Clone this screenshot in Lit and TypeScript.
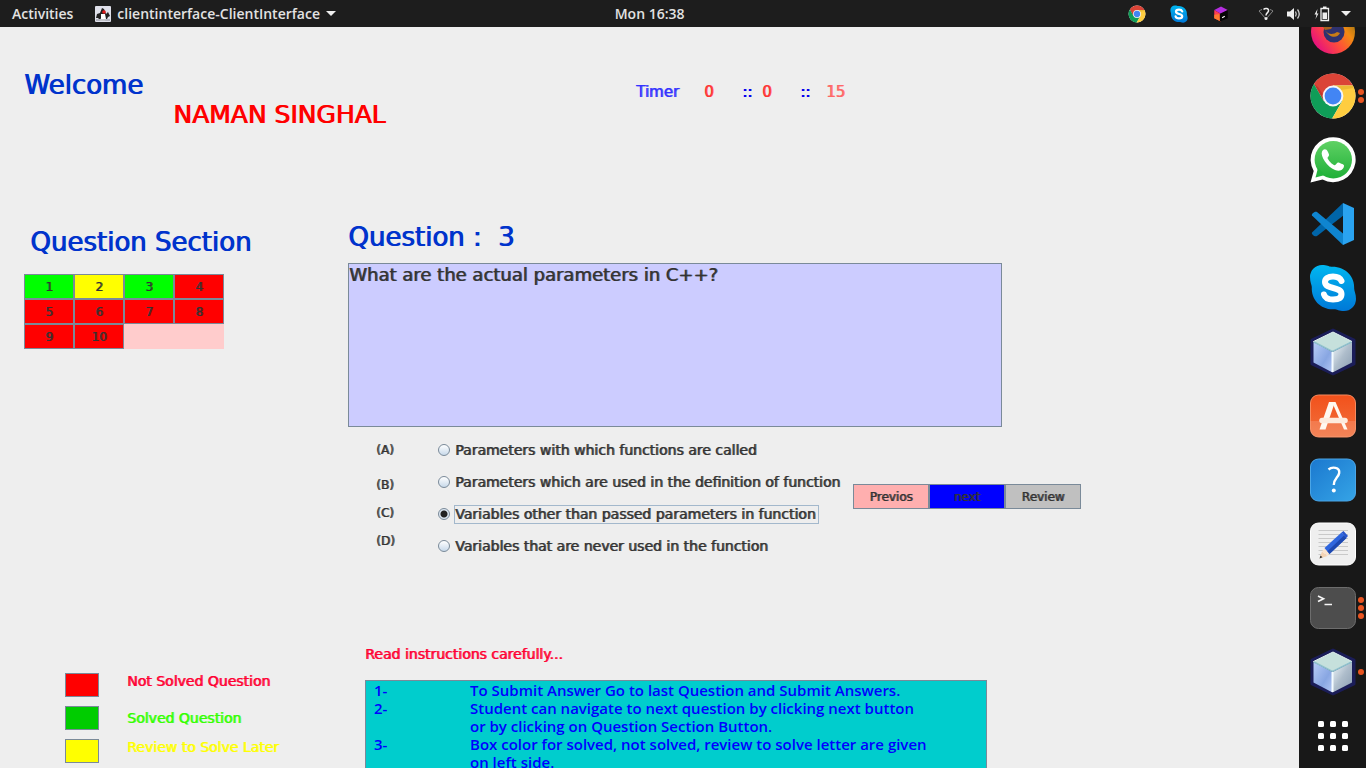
import { LitElement, html, css, svg } from "lit";
import { customElement, property, state } from "lit/decorators.js";
import { classMap } from "lit/directives/class-map.js";

const chrome = svg`
  <circle r="22.5" fill="#fff"/>
  <path d="M19.9-10.5A22.5 22.5 0 0 0-19.04-11.99L-9.09 5.25 0 0V-10.5Z" fill="#db4437"/>
  <path d="M-19.04-11.99A22.5 22.5 0 0 0-.86 22.48L9.09 5.25 0 0-9.09 5.25Z" fill="#0f9d58"/>
  <path d="M-.86 22.48A22.5 22.5 0 0 0 19.9-10.5H0V0L9.09 5.25Z" fill="#ffcd40"/>
  <path d="M0-10.5H19.9L20.8-8 8-6Z" fill="#c99a1c" opacity=".35"/>
  <path d="M-19.04-11.99-9.09 5.25-10.4-2-15-9Z" fill="#8f2318" opacity=".35"/>
  <circle r="10.4" fill="#f4f6fa"/>
  <circle r="8.4" fill="#4285f4"/>`;

const skype = svg`
  <defs><linearGradient id="sk" x1="0" y1="0" x2="0" y2="1"><stop offset="0" stop-color="#00b7f0"/><stop offset="1" stop-color="#0078d7"/></linearGradient></defs>
  <path d="M-11-23C-6-23-4-21.4-2-21.3 12-22 22-12 21.2 1 21.3 3 23 6 23 11A12 12 0 0 1 11 23C6 23 4 21.4 1 21.3-12 22-22 12-21.2-1-21.3-3-23-6-23-11A12 12 0 0 1-11-23Z" fill="url(#sk)"/>
  <path d="M8.500-7C7-10.500 4-11.500 0-11.500-5-11.500-8-9.500-8-6-8 1.800 8.500-1.800 8.500 6 8.500 10 5 11.500 0 11.500-5 11.500-8 10-9 6.500" fill="none" stroke="#fff" stroke-width="6" stroke-linecap="round"/>`;

const cube = svg`
  <defs>
    <linearGradient id="cl" x1="0" y1="0" x2="1" y2="1"><stop offset="0" stop-color="#b9cdf7"/><stop offset=".6" stop-color="#88a6e2"/><stop offset="1" stop-color="#b4c8f4"/></linearGradient>
    <linearGradient id="cr" x1="0" y1="0" x2="1" y2="1"><stop offset="0" stop-color="#f2f9fc"/><stop offset=".5" stop-color="#aebdcb"/><stop offset="1" stop-color="#8a9db1"/></linearGradient>
  </defs>
  <path d="M0-22 21-12V12L0 22-21 12V-12Z" fill="#1b1d58" stroke="#1b1d58" stroke-width="3" stroke-linejoin="round"/>
  <path d="M0-20 19-10.500-.5-1-19.500-10.5Z" fill="#c6e0dc" stroke="#e2f0ef" stroke-width="1"/>
  <path d="M-19.500-10-.5 0V20.500L-19.500 10.500Z" fill="url(#cl)"/>
  <path d="M19-10-.5 0V20.500L19 10.500Z" fill="url(#cr)"/>
  <path d="M-19-10-.5-.5 18.500-10" fill="none" stroke="#8fc0cc" stroke-width="1.500"/>
  <path d="M-.5 0V20" stroke="#f3fbff" stroke-width="2"/>`;

const pictures: Record<string, unknown> = {
  chrome, skype, cube,
  firefox: svg`
    <defs><linearGradient id="ff" x1=".1" y1=".8" x2=".9" y2=".2"><stop offset="0" stop-color="#e6127e"/><stop offset=".4" stop-color="#ff4a3d"/><stop offset=".75" stop-color="#f28a12"/><stop offset="1" stop-color="#a87712"/></linearGradient></defs>
    <circle r="22" fill="url(#ff)"/>
    <circle cx="1" r="10.500" fill="#2f326e"/>
    <path d="M-8-2C-4 4 1 2 4 0L7 1C5 6-3 7-8-2Z" fill="#c87c17"/>
    <path d="M-12-8-8-2-2-3 1-8Z" fill="#a7621f"/>`,
  whatsapp: svg`
    <defs><linearGradient id="wa" x1="0" y1="0" x2="0" y2="1"><stop offset="0" stop-color="#5fd164"/><stop offset="1" stop-color="#20b038"/></linearGradient></defs>
    <path d="M-22.500 22.500-19.300 11A22.500 22.500 0 1 1-10.500 19.500Z" fill="#fff"/>
    <circle cx=".3" cy="-.3" r="18.700" fill="url(#wa)"/>
    <path d="M-17.500 17.500-15 8-8 15Z" fill="#25b33d"/>
    <path d="M-7.500-10.500C-8.500-11-10-10.500-11-8.500-13-4-6 7 2 10 8 12 11 9 11 5.500 11 4.500 6 2.500 5 2.500 3.500 2.500 3 5.500 1.500 5.300-1 4.500-5 0-5.500-2-5.500-3-3.500-4-4-5.500-5-8.500-6-10.500-7.500-10.500Z" fill="#fff"/>`,
  vscode: svg`
    <path d="M10-21-21 8.500C-22 10-18 13.500-16 12L11-9Z" fill="#0065a9"/>
    <path d="M-21-8.500C-22-10-18-13.500-16-12L13 12 10 21Z" fill="#0f85d0"/>
    <path d="M10-21 21-16V16L10 21Z" fill="#2aa3f0"/>`,
  software: svg`
    <defs><linearGradient id="so" x1="0" y1="0" x2="0" y2="1"><stop offset="0" stop-color="#f2511b"/><stop offset="1" stop-color="#f1703d"/></linearGradient></defs>
    <rect x="-22.500" y="-21" width="45" height="42" rx="8" fill="url(#so)" stroke="#f58a5f"/>
    <path d="M-22.500 5H22.500V13Q22.500 21 14.500 21H-14.500Q-22.500 21-22.500 13Z" fill="#fff" opacity=".14"/>
    <path d="M-4-14H2L-7.500 13.500H-13.500Z" fill="#fff8f0"/>
    <path d="M-1-14H2.500L14.500 13.500H11Z" fill="#fff8f0"/>
    <path d="M-11 4.500H12" stroke="#fdebdd" stroke-width="5.500" stroke-linecap="round"/>`,
  help: svg`
    <defs><linearGradient id="he" x1="0" y1="0" x2="1" y2="1"><stop offset="0" stop-color="#1b78cf"/><stop offset="1" stop-color="#35a4e6"/></linearGradient></defs>
    <rect x="-22.500" y="-21" width="45" height="42" rx="8" fill="url(#he)" stroke="#4aa5e6"/>
    <path d="M-4.500-10.500C-1-13.500 7-13 6.200-7 5.500-2.500 .8-1.500 .8 5" fill="none" stroke="#fff" stroke-width="2.400"/>
    <circle cx=".8" cy="10.500" r="2" fill="#fff"/>`,
  editor: svg`
    <rect x="-22.500" y="-21" width="45" height="42" rx="8" fill="#efefef" stroke="#fff"/>
    <path d="M-14.500-13.500H15M-14.500-9.500H15M-14.500-5.500H15M-14.500-1.500H15M-14.500 2.500H15M-14.500 6.500H15M-14.500 10.500H15" stroke="#c9c9c9"/>
    <path d="M-13.500 14.500-11 7.500-5.500 12Z" fill="#f3d3b4"/>
    <path d="M-13.500 14.500-12.500 11.500-10.500 13.200Z" fill="#333"/>
    <path d="M-11 7-7.500 4.500-3.500 9-5.500 12Z" fill="#fae3cd"/>
    <path d="M-8.500 4 8.500-11.500 13.500-6-3.500 10Z" fill="#2f66de"/>
    <path d="M-5.500 7.200 11-8.500 13.500-6-3.500 10Z" fill="#1d48b0"/>
    <path d="M8.500-11.500 10.500-13 15-8 13-6Z" fill="#2755cc"/>`,
  terminal: svg`
    <rect x="-22.500" y="-20.500" width="45" height="41" rx="8" fill="#4d4d4d" stroke="#6d6d6d"/>
    <path d="M-15-12-9.500-9.200-15-6.500M-8.500-3.500H-1" fill="none" stroke="#f5f5f5" stroke-width="1.700"/>`,
  grid: svg`${[-12, 0, 12].map((y) => [-12, 0, 12].map((x) => svg`<rect x=${x - 3} y=${y - 3} width="6" height="6" rx="1.500" fill="#fff"/>`))}`,
  toolbox: svg`
    <path d="M0-20 18-11 0 0-18-11Z" fill="#b52ee0"/>
    <path d="M-18-11 0 0V20L-18 11Z" fill="#ff3d54"/>
    <path d="M-18 2-4 0-2 19-18 11Z" fill="#ff7a2e"/>
    <path d="M18-11-3-1V20L18 11Z" fill="#050505"/>
    <path d="M3 10 10 6" stroke="#fff" stroke-width="3"/>`,
};

@customElement("app-picture")
export class AppPicture extends LitElement {
  @property() name = "";

  static styles = css`
    :host { display: block; }
    .art { display: block; width: 100%; height: 100%; }
  `;

  render() {
    return html`<svg class="art" viewBox="-24 -24 48 48" aria-hidden="true">${pictures[this.name]}</svg>`;
  }
}

@customElement("top-bar")
export class TopBar extends LitElement {
  static styles = css`
    :host {
      display: grid;
      grid-template-columns: 45% 1fr auto;
      align-items: center;
      height: 27px;
      background: #1d1d1d;
      color: #e2e2e2;
      font: 600 14px/20px "Open Sans", "Noto Sans", sans-serif;
    }
    button { border: 0; padding: 0; background: none; color: inherit; font: inherit; }
    .left { display: flex; align-items: center; gap: 22px; padding-left: 12px; }
    .app { display: flex; align-items: center; gap: 6px; }
    .duke { width: 16px; height: 16px; }
    .caret { width: 10px; height: 6px; }
    .clock { justify-self: start; }
    .tray { display: flex; align-items: center; padding-right: 15px; gap: 10px; }
    .mini { width: 18px; height: 18px; }
    .apps { display: flex; gap: 24px; padding-right: 17px; }
    .status { width: 18px; height: 18px; }
  `;

  render() {
    return html`
      <div class="left">
        <button>Activities</button>
        <button class="app">
          <svg class="duke" viewBox="0 0 16 16" aria-hidden="true">
            <rect width="16" height="16" rx="1" fill="#dfe0ea"/>
            <path d="M7 2 9 3 11 8 13 6 15 10 13 11 12 13H4L3 12 1 12 2 8 5 7Z" fill="#222"/>
            <path d="M6 8 10 8 11 13 10 15H5L6 12Z" fill="#fff"/>
            <path d="M1 14H15" stroke="#8b8b96"/>
            <circle cx="9" cy="6" r="1.800" fill="#e01818"/>
          </svg>
          <span>clientinterface-ClientInterface</span>
          <svg class="caret" viewBox="0 0 10 6" aria-hidden="true"><path d="M0 0H10L5 5Z" fill="#eee"/></svg>
        </button>
      </div>
      <button class="clock">Mon 16:38</button>
      <div class="tray">
        <div class="apps">
          <app-picture class="mini" name="chrome"></app-picture>
          <app-picture class="mini" name="skype"></app-picture>
          <app-picture class="mini" name="toolbox"></app-picture>
        </div>
        <svg class="status" viewBox="0 0 16 18" aria-hidden="true">
          <path d="M4 4.500Q2.500 5 1 6L8 14 15 6Q13.500 5 12 4.500" fill="none" stroke="#888"/>
          <path d="M5.500 4.500C7 3 11 3 10.500 6 10 8 8 8 8 10.500" fill="none" stroke="#eee" stroke-width="1.500"/>
          <circle cx="8" cy="13.500" r="1.500" fill="#eee"/>
        </svg>
        <svg class="status" viewBox="0 0 16 18" aria-hidden="true">
          <path d="M1 6.500H4L8 3V15L4 11.500H1Z" fill="#eee"/>
          <path d="M9.500 6.500Q11 9 9.500 11.500M11.500 4.500Q15 9 11.500 13.500" fill="none" stroke="#ccc" stroke-width="1.300"/>
        </svg>
        <svg class="status" viewBox="0 0 16 18" aria-hidden="true">
          <path d="M3.500 4 .5 9.500H2.500L1.500 14 4.500 8.500H2.800Z" fill="#eee"/>
          <path d="M7 3.500H14.500V15.500H7Z" fill="none" stroke="#eee" stroke-width="1.300"/>
          <path d="M9 1.500H12.500V3H9ZM8.500 7.500H13V14H8.500Z" fill="#eee"/>
        </svg>
        <svg class="caret" viewBox="0 0 10 6" aria-hidden="true"><path d="M0 0H10L5 5Z" fill="#eee"/></svg>
      </div>
    `;
  }
}

@customElement("app-dock")
export class AppDock extends LitElement {
  static styles = css`
    :host {
      display: flex;
      flex-direction: column;
      justify-content: flex-end;
      width: 67px;
      overflow: hidden;
      background: #181818;
    }
    .item {
      position: relative;
      flex: none;
      height: 64px;
      border: 0;
      padding: 8px 9px 8px 10px;
      background: none;
    }
    .picture { width: 48px; height: 48px; }
    .dots {
      position: absolute;
      right: 2px;
      top: 0;
      bottom: 0;
      display: flex;
      flex-direction: column;
      justify-content: center;
      gap: 2px;
    }
    .dot { width: 6px; height: 6px; border-radius: 3px; background: #e95420; }
  `;

  private items: [string, string, number][] = [
    ["firefox", "Firefox", 0], ["chrome", "Chrome", 2], ["whatsapp", "WhatsApp", 0],
    ["vscode", "Visual Studio Code", 0], ["skype", "Skype", 0], ["cube", "NetBeans", 0],
    ["software", "Software", 0], ["help", "Help", 0], ["editor", "Text Editor", 0],
    ["terminal", "Terminal", 3], ["cube", "Client Interface", 1], ["grid", "Show Applications", 0],
  ];

  render() {
    return this.items.map(([name, label, dots]) => html`
      <button class="item" aria-label=${label}>
        <app-picture class="picture" name=${name}></app-picture>
        <span class="dots">${Array.from({ length: dots }, () => html`<span class="dot"></span>`)}</span>
      </button>`);
  }
}

@customElement("app-root")
export class AppRoot extends LitElement {
  @state() private chosen = 2;

  private states = ["solved", "review", "solved", "", "", "", "", "", "", ""];

  private answers = [
    "Parameters with which functions are called",
    "Parameters which are used in the definition of function",
    "Variables other than passed parameters in function",
    "Variables that are never used in the function",
  ];

  private rules = [
    "To Submit Answer Go to last Question and Submit Answers.",
    "Student can navigate to next question by clicking next button\nor by clicking on Question Section Button.",
    "Box color for solved, not solved, review to solve letter are given\non left side.",
  ];

  static styles = css`
    :host {
      display: flex;
      flex-direction: column;
      height: 100vh;
      overflow: hidden;
      background: #eee;
      color: #333;
      font: 14px/18px "DejaVu Sans", sans-serif;
      --heavy: 1px 0 color-mix(in srgb, currentColor 80%, transparent);
    }
    .body { flex: 1; min-height: 0; display: flex; }
    .page { flex: 1; min-width: 0; overflow: hidden; padding: 43px 24px 0; text-shadow: var(--heavy); }
    .intro { display: grid; grid-template-columns: 612px 1fr; margin-bottom: 92px; }
    h1, h2, p, ol, fieldset { margin: 0; padding: 0; border: 0; font-weight: 400; }
    .welcome, .title { font-size: 26px; line-height: 30px; color: #03c; text-shadow: 1px 0 currentColor; }
    .name { display: block; padding-left: 149px; color: #f00; font-size: 25px; text-shadow: 1px 0 currentColor; }
    .timer {
      display: grid;
      grid-template-columns: 68px 38px 20px 38px 26px auto;
      justify-content: start;
      padding-top: 13px;
      font-size: 15px;
      color: #33f;
    }
    .unit { color: #f33; }
    .seconds { color: #f66; }
    .colon { color: #00e; text-shadow: 1px 0 currentColor; }
    .exam { display: grid; grid-template-columns: 324px minmax(0, 1fr); row-gap: 83px; }
    .section { padding-top: 5px; }
    .section .title { padding-left: 6px; margin-bottom: 17px; }
    .numbers { display: grid; grid-template-columns: repeat(4, 50px); width: 200px; background: #fcc; }
    .key {
      height: 25px;
      padding: 0;
      border: 1px solid #7a8a99;
      border-radius: 0;
      background: #f00;
      color: #333;
      font: 12px/16px "DejaVu Sans", sans-serif;
      text-shadow: var(--heavy);
    }
    .solved { background: #0f0; }
    .review { background: #ff0; }
    .question .title { margin-bottom: 11px; white-space: pre; }
    .prompt {
      max-width: 654px;
      min-height: 164px;
      box-sizing: border-box;
      border: 1px solid #7a8a99;
      background: #ccf;
      font-size: 18px;
      line-height: 21px;
    }
    .reply { display: flex; padding: 7px 0 0 28px; }
    .letters { display: flex; flex-direction: column; width: 62px; font-size: 12px; line-height: 28px; padding-top: 2px; }
    .letter:first-child { margin-bottom: 7px; }
    .answers { width: 415px; min-width: 0; }
    .answer { display: flex; align-items: center; height: 32px; gap: 4px; }
    .radio {
      appearance: none;
      flex: none;
      width: 12px;
      height: 12px;
      margin: 0;
      border: 1px solid #7a8a99;
      border-radius: 50%;
      background: linear-gradient(#fff, #c8d9ea);
    }
    .radio:checked { background: radial-gradient(circle, #222 0 3px, #dbe6f1 4px); }
    .choice { border: 1px solid transparent; padding-right: 2px; white-space: nowrap; line-height: 17px; }
    .active { border-color: #a3b8cc; }
    .actions { display: flex; align-self: flex-start; padding-top: 50px; }
    .action { width: 76px; }
    .previous { background: #ffafaf; }
    .next { background: #00f; }
    .later { background: #c0c0c0; }
    .legend { display: flex; flex-direction: column; gap: 9px; padding: 28px 0 0 41px; line-height: 16px; }
    .entry { display: flex; align-items: center; gap: 28px; height: 24px; color: #f03; }
    .raised { align-items: flex-start; }
    .swatch { width: 32px; height: 22px; border: 1px solid #7a8a99; background: #f00; }
    .green { color: #3f0; }
    .green .swatch { background: #0c0; }
    .yellow { color: #ff0; }
    .yellow .swatch { background: #ff0; }
    .help { padding-left: 17px; }
    .lead { color: #f03; margin-bottom: 17px; }
    .rules {
      max-width: 620px;
      border: 1px solid #7a8a99;
      background: #00cdcd;
      color: #00f;
      font: 600 15px/18px "Open Sans", "Noto Sans", sans-serif;
      text-shadow: none;
      list-style: none;
    }
    .rule { display: grid; grid-template-columns: 96px 1fr; padding-left: 8px; white-space: pre-line; }
  `;

  render() {
    return html`
      <top-bar></top-bar>
      <div class="body">
        <main class="page">
          <div class="intro">
            <h1 class="welcome">Welcome <span class="name">NAMAN SINGHAL</span></h1>
            <div class="timer" role="timer">
              <span>Timer</span><span class="unit">0</span><span class="colon">::</span>
              <span class="unit">0</span><span class="colon">::</span><span class="seconds">15</span>
            </div>
          </div>
          <div class="exam">
            <section class="section">
              <h2 class="title">Question Section</h2>
              <div class="numbers">
                ${this.states.map((s, i) => html`<button class=${classMap({ key: true, solved: s === "solved", review: s === "review" })}>${i + 1}</button>`)}
              </div>
            </section>
            <section class="question">
              <h2 class="title">Question :  3</h2>
              <div class="prompt">What are the actual parameters in C++?</div>
              <div class="reply">
                <div class="letters">
                  ${["A", "B", "C", "D"].map((l, i) => html`<label class="letter" for="answer${i}">(${l})</label>`)}
                </div>
                <fieldset class="answers" aria-label="Answers">
                  ${this.answers.map((text, i) => html`
                    <label class="answer">
                      <input class="radio" type="radio" id="answer${i}" name="answer" .checked=${this.chosen === i} @change=${() => (this.chosen = i)}>
                      <span class=${classMap({ choice: true, active: this.chosen === i })}>${text}</span>
                    </label>`)}
                </fieldset>
                <div class="actions">
                  <button class="key action previous">Previos</button>
                  <button class="key action next">next</button>
                  <button class="key action later">Review</button>
                </div>
              </div>
            </section>
            <section class="legend">
              <div class="entry raised"><span class="swatch"></span>Not Solved Question</div>
              <div class="entry green"><span class="swatch"></span>Solved Question</div>
              <div class="entry raised yellow"><span class="swatch"></span>Review to Solve Later</div>
            </section>
            <section class="help">
              <p class="lead">Read instructions carefully...</p>
              <ol class="rules">
                ${this.rules.map((text, i) => html`<li class="rule"><span>${i + 1}-</span><span>${text}</span></li>`)}
              </ol>
            </section>
          </div>
        </main>
        <app-dock></app-dock>
      </div>
    `;
  }
}
